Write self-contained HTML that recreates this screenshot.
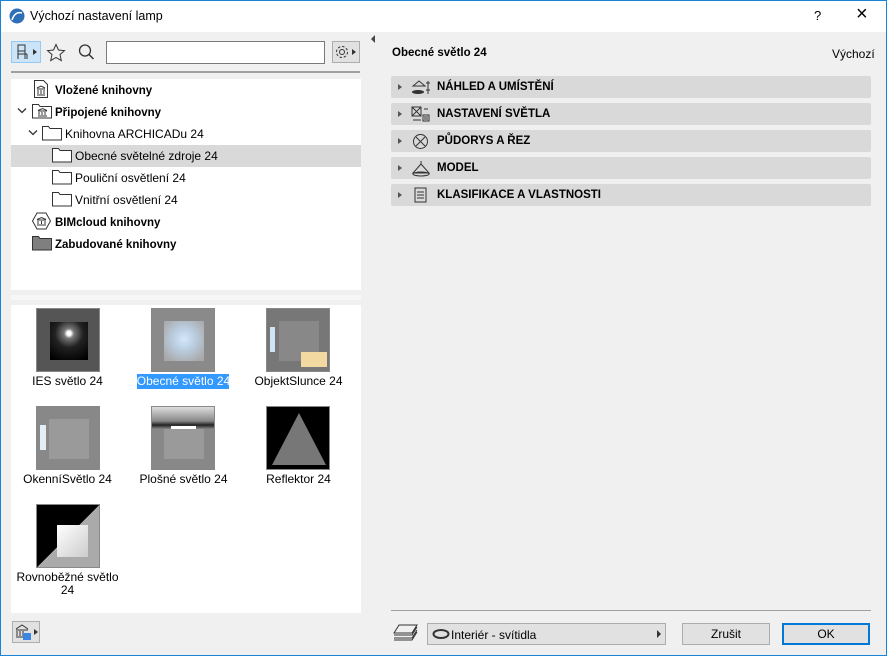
<!DOCTYPE html>
<html><head><meta charset="utf-8"><style>
*{box-sizing:border-box;margin:0;padding:0}
body{width:887px;height:656px;overflow:hidden;background:#f0f0f0;font-family:"Liberation Sans",sans-serif;font-size:12px;color:#000;position:relative}
.a{position:absolute}
.win{position:absolute;left:0;top:0;width:887px;height:656px;border:1px solid #1883d7}
.tb{left:1px;top:1px;width:885px;height:31px;background:#fff}
.row{position:absolute;left:11px;width:350px;height:22px;line-height:22px}
.b{font-weight:bold;font-size:11.5px}
.sec{position:absolute;left:391px;width:480px;height:22px;background:#d9d9d9;border-radius:2px;line-height:23px;font-weight:bold;font-size:11.5px}
.sec .t{position:absolute;left:7px;top:8px;width:0;height:0;border-left:4px solid #555;border-top:3px solid transparent;border-bottom:3px solid transparent}
.sec .l{position:absolute;left:46px}
.th{position:absolute;width:64px;height:64px;border:1px solid #888;overflow:hidden}
.in{position:absolute;left:12px;top:12px;width:40px;height:40px}
.lb{position:absolute;width:115px;text-align:center;font-size:12px;line-height:13px}
.btn{position:absolute;background:#e1e1e1;border:1px solid #adadad;text-align:center;line-height:20px}
</style></head><body>
<div class="win"></div>
<div class="a tb"></div>
<svg class="a" style="left:9px;top:8px" width="16" height="16"><circle cx="8" cy="8" r="7.5" fill="#2f6fb8"/><path d="M3 12 Q6 3 13 5" stroke="#fff" stroke-width="1.5" fill="none"/></svg>
<div class="a" style="left:30px;top:9px;font-size:12.5px">Výchozí nastavení lamp</div>
<div class="a" style="left:814px;top:8px;font-size:13px">?</div>
<div class="a" style="left:856px;top:3px;font-size:20px;font-weight:300">×</div>

<div class="a" style="left:11px;top:41px;width:30px;height:22px;background:#cce4f7;border:1px solid #99c9ef"></div>
<svg class="a" style="left:14px;top:43px" width="26" height="18"><path d="M4 2h7v6H4zM4 8v8M11 8v8M4 11h9M13 11v5" stroke="#333" fill="none"/><path d="M19 6l4 3-4 3z" fill="#333"/></svg>
<svg class="a" style="left:46px;top:43px" width="20" height="19"><path d="M10 1.5l2.5 5.5 6 .6-4.5 4 1.3 6L10 14.5 4.7 17.6 6 11.6 1.5 7.6l6-.6z" stroke="#333" fill="none"/></svg>
<svg class="a" style="left:77px;top:43px" width="18" height="18"><circle cx="8" cy="7.5" r="5.5" stroke="#333" fill="none" stroke-width="1.3"/><path d="M12 11.5l4.5 4.5" stroke="#333" stroke-width="1.5"/></svg>
<div class="a" style="left:106px;top:41px;width:219px;height:23px;background:#fff;border:1px solid #7a7a7a"></div>
<div class="a" style="left:332px;top:41px;width:28px;height:22px;background:#e1e1e1;border:1px solid #adadad"></div>
<svg class="a" style="left:334px;top:44px" width="26" height="17"><circle cx="8" cy="8" r="5.5" stroke="#333" fill="none" stroke-dasharray="2.5 1.8"/><circle cx="8" cy="8" r="2.5" stroke="#333" fill="none"/><path d="M18 5l4 3-4 3z" fill="#333"/></svg>
<div class="a" style="left:11px;top:71px;width:349px;height:2px;background:#a0a0a0"></div>

<div class="a" style="left:11px;top:79px;width:350px;height:211px;background:#fff"></div>
<div class="a" style="left:11px;top:145px;width:350px;height:22px;background:#d9d9d9"></div>
<svg class="a" style="left:33px;top:80px" width="16" height="18"><path d="M1.5 .5h9l4 4v13h-13z" stroke="#333" fill="none"/><path d="M4 9h8M4 15h8M5 10v4M8 10v4M11 10v4M4 8l4-2 4 2" stroke="#333" fill="none"/></svg>
<div class="row b" style="top:80px;left:55px">Vložené knihovny</div>
<svg class="a" style="left:17px;top:107px" width="10" height="8"><path d="M1 1.5l4 4 4-4" stroke="#333" fill="none" stroke-width="1.3"/></svg>
<svg class="a" style="left:32px;top:103px" width="20" height="16"><path d="M.5 1.5h6l1.5 2h11.5v11.5H.5z" stroke="#333" fill="none"/><path d="M6 8h9M6 13h9M7 9v3M10 9v3M13 9v3M6 7.5l4.5-2 4.5 2" stroke="#333" fill="none"/></svg>
<div class="row b" style="top:102px;left:55px">Připojené knihovny</div>
<svg class="a" style="left:28px;top:129px" width="10" height="8"><path d="M1 1.5l4 4 4-4" stroke="#333" fill="none" stroke-width="1.3"/></svg>
<svg class="a" style="left:42px;top:125px" width="20" height="16"><path d="M.5 1.5h6l1.5 2h11.5v11.5H.5z" stroke="#333" fill="#fff"/></svg>
<div class="row" style="top:123px;left:65px">Knihovna ARCHICADu 24</div>
<svg class="a" style="left:52px;top:147px" width="20" height="16"><path d="M.5 1.5h6l1.5 2h11.5v11.5H.5z" stroke="#333" fill="#fff"/></svg>
<div class="row" style="top:145px;left:75px">Obecné světelné zdroje 24</div>
<svg class="a" style="left:52px;top:169px" width="20" height="16"><path d="M.5 1.5h6l1.5 2h11.5v11.5H.5z" stroke="#333" fill="#fff"/></svg>
<div class="row" style="top:167px;left:75px">Pouliční osvětlení 24</div>
<svg class="a" style="left:52px;top:191px" width="20" height="16"><path d="M.5 1.5h6l1.5 2h11.5v11.5H.5z" stroke="#333" fill="#fff"/></svg>
<div class="row" style="top:189px;left:75px">Vnitřní osvětlení 24</div>
<svg class="a" style="left:32px;top:212px" width="19" height="18"><path d="M5 1h9l4.5 8-4.5 8H5L.5 9z" stroke="#333" fill="none"/><path d="M5 8h9M5 13h9M6 9v3M9.5 9v3M13 9v3M5 7.5l4.5-2 4.5 2" stroke="#333" fill="none"/></svg>
<div class="row b" style="top:212px;left:55px">BIMcloud knihovny</div>
<svg class="a" style="left:32px;top:235px" width="20" height="16"><path d="M.5 1.5h6l1.5 2h11.5v11.5H.5z" stroke="#333" fill="#7f7f7f"/></svg>
<div class="row b" style="top:234px;left:55px">Zabudované knihovny</div>

<div class="a" style="left:11px;top:295px;width:350px;height:5px;background:#f7f7f7"></div>
<div class="a" style="left:11px;top:305px;width:350px;height:308px;background:#fff"></div>
<div class="th" style="left:36px;top:308px;background:#555"><div class="in" style="left:13px;top:13px;width:38px;height:38px;background:radial-gradient(circle at 50% 30%,#fff 0,#fff 2px,#777 5px,#222 14px,#000 30px)"></div></div>
<div class="th" style="left:151px;top:308px;background:#8a8a8a"><div class="in" style="background:radial-gradient(circle at 50% 45%,#d5e8fb 0,#bcd0e4 10px,#a8a8a8 26px)"></div></div>
<div class="th" style="left:266px;top:308px;background:#777"><div class="in" style="background:#888"></div><div class="a" style="left:3px;top:18px;width:5px;height:25px;background:#cfe3f4"></div><div class="a" style="left:34px;top:43px;width:26px;height:15px;background:#f2d9a1"></div></div>
<div class="th" style="left:36px;top:406px;background:#888"><div class="in" style="background:#9a9a9a"></div><div class="a" style="left:3px;top:18px;width:6px;height:25px;background:#e6eef5"></div></div>
<div class="th" style="left:151px;top:406px;background:linear-gradient(#ddd 0,#888 14px,#222 18px,#888 22px)"><div class="in" style="top:22px;height:30px;background:#9a9a9a"></div><div class="a" style="left:19px;top:19px;width:25px;height:3px;background:#fff"></div></div>
<div class="th" style="left:266px;top:406px;background:#000"><div class="a" style="left:5px;top:6px;width:0;height:0;border-left:27px solid transparent;border-right:27px solid transparent;border-bottom:52px solid #777"></div></div>
<div class="th" style="left:36px;top:504px;background:linear-gradient(135deg,#000 50%,#aaa 50%)"><div class="a" style="left:20px;top:20px;width:31px;height:32px;background:linear-gradient(135deg,#fff,#ccc)"></div></div>
<div class="lb" style="left:10px;top:375px">IES světlo 24</div>
<div class="a" style="left:137px;top:374px;width:92px;height:15px;background:#3399ff"></div>
<div class="lb" style="left:126px;top:375px;color:#fff">Obecné světlo 24</div>
<div class="lb" style="left:241px;top:375px">ObjektSlunce 24</div>
<div class="lb" style="left:10px;top:473px">OkenníSvětlo 24</div>
<div class="lb" style="left:126px;top:473px">Plošné světlo 24</div>
<div class="lb" style="left:241px;top:473px">Reflektor 24</div>
<div class="lb" style="left:10px;top:571px">Rovnoběžné světlo<br>24</div>
<div class="btn" style="left:12px;top:621px;width:28px;height:22px"></div>
<svg class="a" style="left:14px;top:623px" width="26" height="18"><path d="M2 7h12M2 14h9M3 8v5M6 8v5M9 8v5M2 6l6-4 6 4" stroke="#333" fill="none"/><rect x="9" y="10" width="8" height="7" fill="#3b86e0"/><path d="M20 6l4 3-4 3z" fill="#333"/></svg>

<div class="a" style="left:371px;top:35px;width:0;height:0;border-right:4px solid #444;border-top:4px solid transparent;border-bottom:4px solid transparent"></div>

<div class="a b" style="left:392px;top:47px">Obecné světlo 24</div>
<div class="a" style="left:832px;top:47px">Výchozí</div>
<div class="sec" style="top:76px"><span class="t"></span><svg class="a" style="left:19px;top:3px" width="22" height="17"><path d="M3 7l6-5 6 5zM2 13h12" stroke="#333" fill="none"/><ellipse cx="8" cy="13" rx="6" ry="2" fill="#333"/><path d="M18 2v13M16 4h4M16 11h4" stroke="#333"/></svg><span class="l">NÁHLED A UMÍSTĚNÍ</span></div>
<div class="sec" style="top:103px"><span class="t"></span><svg class="a" style="left:20px;top:3px" width="20" height="17"><rect x="1" y="1" width="9" height="9" stroke="#333" fill="none"/><path d="M1 1l9 9M10 1L1 10M12 9h6v6h-6zM13 11h4M13 13h4M2 14h8M13 3h4" stroke="#333" fill="none"/></svg><span class="l">NASTAVENÍ SVĚTLA</span></div>
<div class="sec" style="top:130px"><span class="t"></span><svg class="a" style="left:21px;top:3px" width="17" height="17"><circle cx="8.5" cy="8.5" r="7" stroke="#333" fill="none"/><path d="M4 4l9 9M13 4l-9 9" stroke="#333"/></svg><span class="l">PŮDORYS A ŘEZ</span></div>
<div class="sec" style="top:157px"><span class="t"></span><svg class="a" style="left:20px;top:3px" width="20" height="17"><path d="M10 1v3L2 13h16L10 4" stroke="#333" fill="none"/><ellipse cx="10" cy="14" rx="8" ry="2" stroke="#333" fill="none"/></svg><span class="l">MODEL</span></div>
<div class="sec" style="top:184px"><span class="t"></span><svg class="a" style="left:23px;top:3px" width="14" height="17"><rect x="1" y="1" width="11" height="14" stroke="#333" fill="none"/><path d="M3 5h7M3 8h7M3 11h7" stroke="#333"/></svg><span class="l">KLASIFIKACE A VLASTNOSTI</span></div>

<div class="a" style="left:391px;top:610px;width:480px;height:1px;background:#a0a0a0"></div>
<svg class="a" style="left:393px;top:623px" width="26" height="19"><path d="M6 2h18l-5 8H1zM1 12h18l5-8M1 15h18l5-8M1 17h18l5-8" stroke="#333" fill="none"/></svg>
<div class="btn" style="left:427px;top:623px;width:239px;height:22px;text-align:left"></div>
<svg class="a" style="left:432px;top:628px" width="18" height="12"><ellipse cx="9" cy="6" rx="7.5" ry="4" stroke="#333" stroke-width="2" fill="none"/></svg>
<div class="a" style="left:451px;top:628px">Interiér - svítidla</div>
<div class="a" style="left:657px;top:630px;width:0;height:0;border-left:4px solid #333;border-top:4px solid transparent;border-bottom:4px solid transparent"></div>
<div class="btn" style="left:682px;top:623px;width:88px;height:22px">Zrušit</div>
<div class="btn" style="left:782px;top:623px;width:88px;height:22px;border:2px solid #0078d7;line-height:18px">OK</div>
</body></html>
